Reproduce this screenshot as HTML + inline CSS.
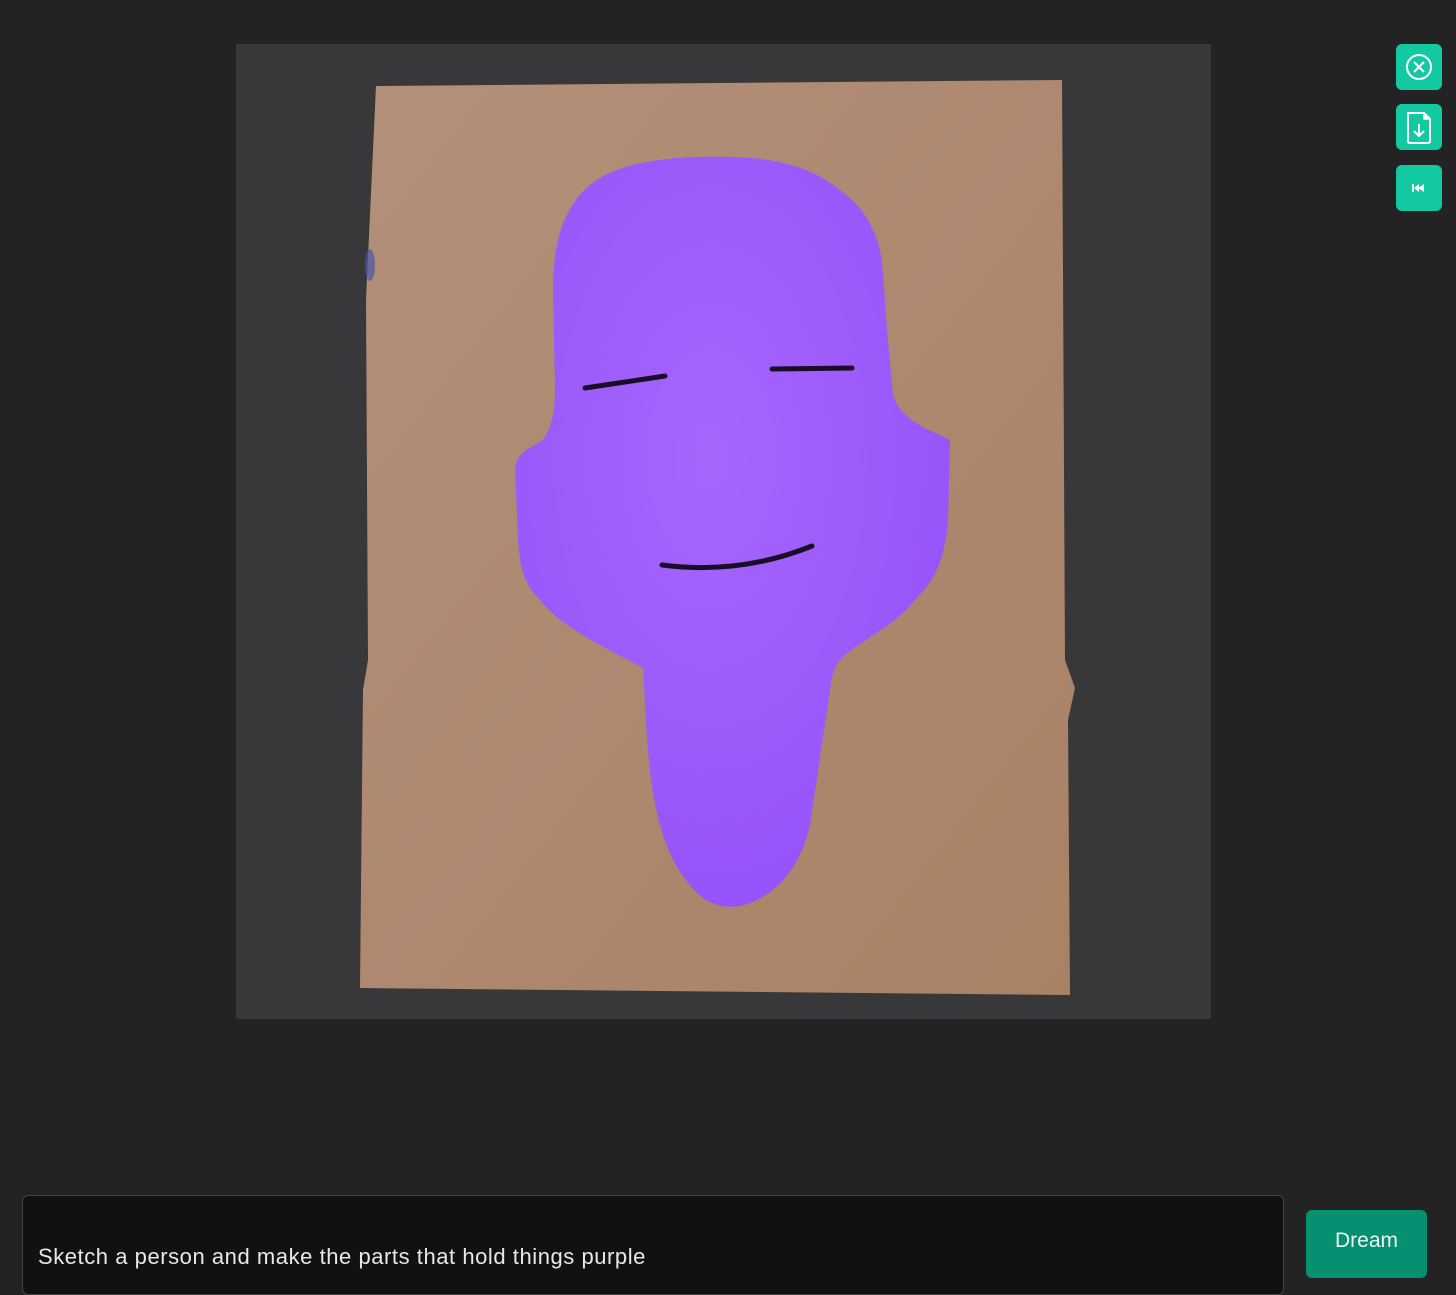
<!DOCTYPE html>
<html><head><meta charset="utf-8"><style>
html,body{margin:0;padding:0;background:#232323;width:1456px;height:1278px;overflow:hidden;font-family:"Liberation Sans",sans-serif}
.btn{position:absolute;left:1396px;width:46px;height:46px;background:#12c9a2;border-radius:6px}
.prompt{position:absolute;left:22px;top:1195px;width:1262px;height:100px;background:#111;border:1px solid #444;border-radius:6px;box-sizing:border-box}
.prompt span{position:absolute;left:15px;top:48px;color:#e8e8e8;font-size:22px;letter-spacing:0.55px}
.dream{position:absolute;left:1306px;top:1210px;width:121px;height:68px;background:#078f71;border-radius:6px;color:#e8f5f0;font-size:21px;text-align:center;line-height:62px}
</style></head><body>
<svg style="position:absolute;left:0;top:0" width="1456" height="1278">
<defs>
<linearGradient id="pap" x1="0" y1="0" x2="1" y2="1"><stop offset="0" stop-color="#b3907a"/><stop offset="1" stop-color="#a98165"/></linearGradient>
<radialGradient id="pur" cx="0.45" cy="0.4" r="0.7"><stop offset="0" stop-color="#a566fb"/><stop offset="1" stop-color="#9550fb"/></radialGradient>
</defs>
<rect x="236" y="44" width="975" height="975" fill="#38383b"/>
<path d="M376,86 L1062,80 L1065,660 L1075,688 L1068,720 L1070,995 L360,988 L363,690 L368,660 L366,300 L376,86Z" fill="url(#pap)"/>
<path d="M733,157 C680,155 620,160 590,185 C560,210 553,250 553,290 L555,390 C555,420 548,432 543,440 C530,448 516,452 515,470 L518,540 C520,570 525,585 540,600 C560,625 590,640 643,668 L647,740 C652,800 660,850 690,885 C705,905 725,910 745,905 C775,895 800,870 810,825 L830,690 C833,670 835,664 845,655 C870,635 895,625 915,600 C935,580 945,560 948,520 L950,440 C930,430 900,420 893,395 L887,330 C884,290 883,265 880,250 C872,220 860,205 840,190 C810,165 770,158 733,157Z" fill="url(#pur)"/>
<path d="M585,388 L665,376" stroke="#1a0d26" stroke-width="5" stroke-linecap="round"/>
<path d="M772,369 L852,368" stroke="#1a0d26" stroke-width="5" stroke-linecap="round"/>
<path d="M662,565 Q740,575 812,546" stroke="#1a0d26" stroke-width="5" fill="none" stroke-linecap="round"/>
<ellipse cx="370" cy="265" rx="5" ry="16" fill="#4a56a8" opacity="0.7"/>
</svg>
<div class="btn" style="top:44px"><svg width="46" height="46"><circle cx="23" cy="23" r="12" fill="none" stroke="#fff" stroke-width="2"/><path d="M18,18 L28,28 M28,18 L18,28" stroke="#fff" stroke-width="2"/></svg></div>
<div class="btn" style="top:104px"><svg width="46" height="46"><path d="M12,9 L28,9 L34,15 L34,37 Q34,39 32,39 L14,39 Q12,39 12,37Z" fill="none" stroke="#fff" stroke-width="2"/><path d="M28,9 L28,15 L34,15" fill="#fff" stroke="#fff" stroke-width="1.5"/><path d="M23,20 L23,32 M18,27 L23,32 L28,27" fill="none" stroke="#fff" stroke-width="2"/></svg></div>
<div class="btn" style="top:165px"><svg width="46" height="46"><rect x="16" y="19" width="2" height="8" fill="#fff"/><path d="M18,23 L23,19 L23,27Z M22,23 L28,19 L28,27Z" fill="#fff"/></svg></div>
<div class="prompt"><span>Sketch a person and make the parts that hold things purple</span></div>
<div class="dream">Dream</div>
</body></html>
